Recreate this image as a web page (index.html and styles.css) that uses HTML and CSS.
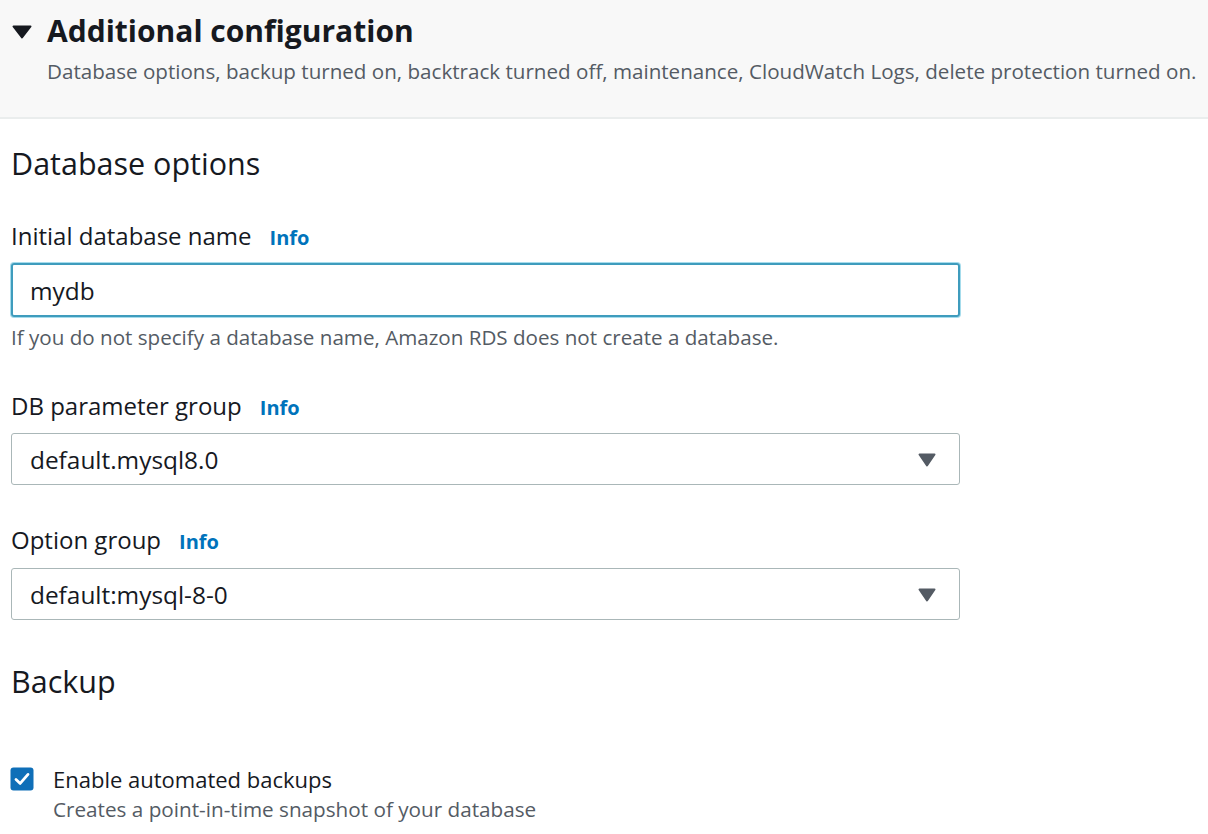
FILE: index.html
```html
<!DOCTYPE html>
<html>
<head>
<meta charset="utf-8">
<link rel="stylesheet" href="styles.css">
</head>
<body>
<div class="page">
  <header class="expander">
    <div class="exp-title">
      <svg class="caret" width="20" height="14" viewBox="0 0 20 14"><path d="M1.5 1.5 H18.5 L10 12.5 Z" fill="#16191f" stroke="#16191f" stroke-width="2" stroke-linejoin="round"/></svg>
      <h2>Additional configuration</h2>
    </div>
    <p class="exp-desc">Database options, backup turned on, backtrack turned off, maintenance, CloudWatch Logs, delete protection turned on.</p>
  </header>
  <main class="content">
    <h3 class="section-title">Database options</h3>
    <div class="field first">
      <div class="label"><span>Initial database name</span><a class="info">Info</a></div>
      <div class="input focused">mydb</div>
      <div class="hint">If you do not specify a database name, Amazon RDS does not create a database.</div>
    </div>
    <div class="field">
      <div class="label"><span>DB parameter group</span><a class="info">Info</a></div>
      <div class="input select"><span>default.mysql8.0</span><svg class="tri" width="18" height="14" viewBox="0 0 18 14"><path d="M1.5 1.5 H16.5 L9 12.5 Z" fill="#545b64" stroke="#545b64" stroke-width="2" stroke-linejoin="round"/></svg></div>
    </div>
    <div class="field second">
      <div class="label"><span>Option group</span><a class="info">Info</a></div>
      <div class="input select"><span>default:mysql-8-0</span><svg class="tri" width="18" height="14" viewBox="0 0 18 14"><path d="M1.5 1.5 H16.5 L9 12.5 Z" fill="#545b64" stroke="#545b64" stroke-width="2" stroke-linejoin="round"/></svg></div>
    </div>
    <h3 class="section-title backup">Backup</h3>
    <div class="check-row">
      <span class="checkbox">
        <svg width="24" height="24" viewBox="0 0 24 24"><rect x="0.5" y="0.5" width="23" height="23" rx="3" fill="#0f6fb8"/><path d="M6 12.4 L10.2 16.4 L18 7.4" fill="none" stroke="#fff" stroke-width="2.8" stroke-linecap="round" stroke-linejoin="round"/></svg>
      </span>
      <div class="check-text">
        <div class="check-label">Enable automated backups</div>
        <div class="check-desc">Creates a point-in-time snapshot of your database</div>
      </div>
    </div>
  </main>
</div>
</body>
</html>
```
FILE: styles.css
```css
* { box-sizing: border-box; }
html, body { margin: 0; padding: 0; background: #fff; }
body { font-family: "Open Sans", "Noto Sans", sans-serif; color: #16191f; overflow: hidden; }
.page { width: 1208px; }
.expander {
  background: #f8f8f8;
  border-bottom: 2px solid #eaeded;
  height: 119px;
  padding: 11px 0 0 12px;
}
.exp-title { display: flex; align-items: center; gap: 15px; }
.caret { display: block; margin-top: 1px; }
.exp-title h2 { margin: 0; font-size: 30px; font-weight: 700; line-height: 40px; }
.exp-desc { margin: 6px 0 0 35px; font-size: 20.6px; color: #545b64; line-height: 28px; white-space: nowrap; }
.content { padding: 24px 0 0 11px; }
.section-title { margin: 0; font-size: 30.5px; font-weight: 400; line-height: 40px; }
.field { width: 949px; margin-top: 39px; }
.field.first { margin-top: 37px; }
.field.second { margin-top: 39px; }
.label { display: flex; align-items: baseline; gap: 18px; font-size: 24px; line-height: 32px; height: 32px; }
.info { color: #0073bb; font-weight: 700; font-size: 20px; line-height: 20px; }
.input {
  margin-top: 11px;
  height: 52px;
  border: 1px solid #aab7b8;
  border-radius: 3px;
  padding: 0 23px 0 18px;
  display: flex; align-items: center; justify-content: space-between;
  font-size: 24.4px;
}
.second .input { margin-top: 12px; }
.input.focused { border: 2px solid #3f9cbd; box-shadow: 0 0 0 1px #a6dcec; height: 54px; padding-left: 17px; }
.tri { display: block; margin-top: 2px; }
.hint { font-size: 20.6px; color: #545b64; line-height: 28px; margin-top: 6px; }
.backup { margin-top: 41px; }
.check-row { display: flex; gap: 19px; margin-top: 63px; align-items: flex-start; }
.checkbox { display: block; width: 24px; height: 24px; margin-top: 3px; margin-left: -1px; }
.checkbox svg { display: block; }
.check-label { font-size: 22px; line-height: 30px; }
.check-desc { font-size: 20.7px; color: #545b64; line-height: 28px; margin-top: 1px; }
```
